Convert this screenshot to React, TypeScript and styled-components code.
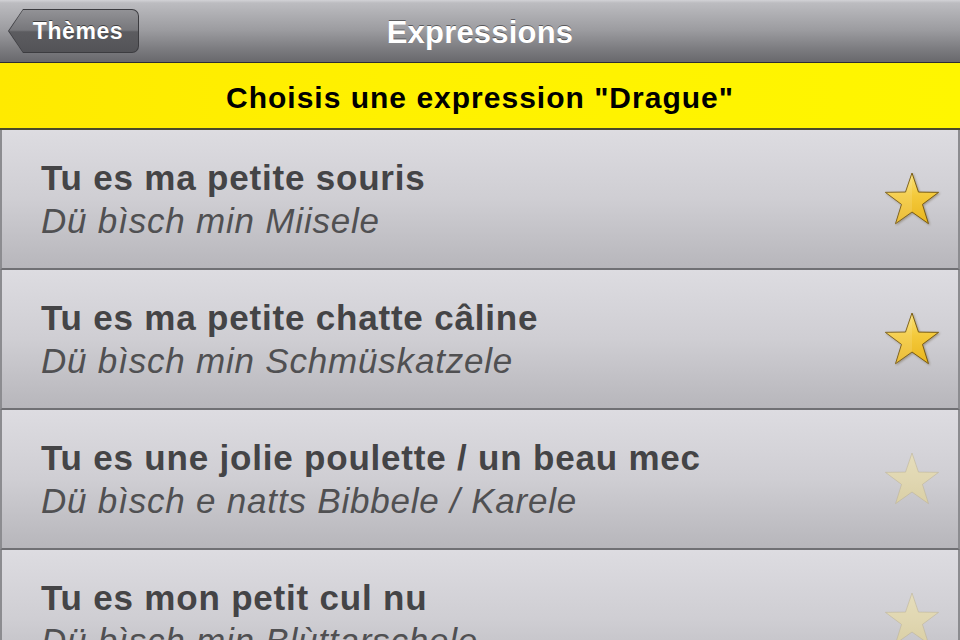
import styled, { createGlobalStyle } from 'styled-components';

type Expression = {
  id: number;
  french: string;
  alsacien: string;
  favorite: boolean;
};

const EXPRESSIONS: Expression[] = [
  { id: 1, french: 'Tu es ma petite souris', alsacien: 'Dü bìsch min Miisele', favorite: true },
  { id: 2, french: 'Tu es ma petite chatte câline', alsacien: 'Dü bìsch min Schmüskatzele', favorite: true },
  { id: 3, french: 'Tu es une jolie poulette / un beau mec', alsacien: 'Dü bìsch e natts Bibbele / Karele', favorite: false },
  { id: 4, french: 'Tu es mon petit cul nu', alsacien: 'Dü bìsch min Blùttarschele', favorite: false },
];

const STAR_POINTS =
  '28,2 34.47,21.1 54.6,21.35 38.46,33.4 44.46,52.65 28,41 11.54,52.65 17.54,33.4 1.4,21.35 21.53,21.1';

const Star = ({ active }: { active: boolean }) => (
  <StarIcon width="56" height="56" viewBox="0 0 56 56" $active={active}>
    <defs>
      <linearGradient id="starOn" x1="0" y1="0" x2="0" y2="1">
        <stop offset="0" stopColor="#f9e27a" />
        <stop offset="0.45" stopColor="#f4c93a" />
        <stop offset="1" stopColor="#e9b51e" />
      </linearGradient>
      <linearGradient id="starOff" x1="0" y1="0" x2="0" y2="1">
        <stop offset="0" stopColor="#ece2b4" />
        <stop offset="1" stopColor="#e2d49a" />
      </linearGradient>
    </defs>
    <polygon
      points={STAR_POINTS}
      fill={active ? 'url(#starOn)' : 'url(#starOff)'}
      stroke={active ? '#7a5c12' : '#b8ad88'}
      strokeWidth={active ? 1 : 0.6}
      strokeLinejoin="miter"
    />
    {active && <polygon points="28,2 28,41 11.54,52.65 17.54,33.4 1.4,21.35 21.53,21.1" fill="#ffffff" opacity="0.12" />}
  </StarIcon>
);

const App = () => {
  return (
    <Screen>
      <GlobalStyle />
      <NavBar>
        <BackButton>
          <BackInner>Thèmes</BackInner>
        </BackButton>
        <NavTitle>Expressions</NavTitle>
      </NavBar>
      <Banner>Choisis une expression "Drague"</Banner>
      <List>
        {EXPRESSIONS.map(item => (
          <Row key={item.id}>
            <TextBox>
              <French>{item.french}</French>
              <Alsacien>{item.alsacien}</Alsacien>
            </TextBox>
            <Star active={item.favorite} />
          </Row>
        ))}
      </List>
    </Screen>
  );
};

const GlobalStyle = createGlobalStyle`
  html, body {
    margin: 0;
    padding: 0;
    background: #c8c7cc;
    overflow: hidden;
  }
  body {
    font-family: "Liberation Sans", Helvetica, Arial, sans-serif;
  }
`;

const Screen = styled.div`
  width: 960px;
  height: 640px;
  overflow: hidden;
  display: flex;
  flex-direction: column;
`;

const NavBar = styled.header`
  box-sizing: border-box;
  height: 63px;
  flex-shrink: 0;
  display: flex;
  align-items: center;
  justify-content: center;
  padding: 3px 8px 0;
  position: relative;
  background: linear-gradient(to bottom, #d2d2d6 0px, #bcbcc0 3px, #9c9ca0 30px, #7a7a7e 50px, #6a6a6e 61px);
  border-bottom: 1px solid #2e2e30;
`;

const BackButton = styled.div`
  position: absolute;
  left: 8px;
  top: 9px;
  width: 131px;
  height: 44px;
  box-sizing: border-box;
  padding: 1px;
  background: #3c3c40;
  border-radius: 0 7px 7px 0;
  clip-path: polygon(0 50%, 15px 0, 100% 0, 100% 100%, 15px 100%);
  display: flex;
`;

const BackInner = styled.div`
  flex: 1;
  display: flex;
  align-items: center;
  justify-content: center;
  padding-left: 9px;
  border-radius: 0 6px 6px 0;
  clip-path: polygon(0 50%, 14px 0, 100% 0, 100% 100%, 14px 100%);
  background: linear-gradient(to bottom, #929296 0%, #77777b 48%, #5c5c60 52%, #535357 100%);
  color: #ffffff;
  font-size: 23px;
  letter-spacing: 0.6px;
  font-weight: 700;
  text-shadow: 0 -1px 0 rgba(0, 0, 0, 0.5);
`;

const NavTitle = styled.h1`
  margin: 0;
  color: #ffffff;
  font-size: 31px;
  font-weight: 700;
  letter-spacing: 0.2px;
  text-shadow: 0 -1px 0 rgba(0, 0, 0, 0.45);
`;

const Banner = styled.div`
  box-sizing: border-box;
  height: 67px;
  flex-shrink: 0;
  display: flex;
  align-items: center;
  justify-content: center;
  padding-top: 5px;
  background: linear-gradient(to right, #ffea00 0%, #fff100 40%, #fff600 100%);
  border-bottom: 2px solid #4a4a2a;
  color: #000000;
  font-size: 30px;
  letter-spacing: 1px;
  font-weight: 700;
`;

const List = styled.div`
  display: flex;
  flex-direction: column;
`;

const Row = styled.div`
  box-sizing: border-box;
  height: 140px;
  flex-shrink: 0;
  display: flex;
  align-items: center;
  justify-content: space-between;
  padding: 0 18px 0 41px;
  background: linear-gradient(to bottom, #dddce1 0%, #cfced3 50%, #b7b6bb 100%);
  border-left: 2px solid #8c8c90;
  border-right: 2px solid #8c8c90;
  border-bottom: 2px solid #707074;
`;

const TextBox = styled.div`
  display: flex;
  flex-direction: column;
  margin-left: -2px;
`;

const French = styled.div`
  font-size: 35px;
  line-height: 43px;
  font-weight: 700;
  color: #444446;
  letter-spacing: 0.8px;
`;

const Alsacien = styled.div`
  font-size: 35px;
  line-height: 43px;
  font-style: italic;
  color: #505052;
  letter-spacing: 0.8px;
`;

const StarIcon = styled.svg<{ $active: boolean }>`
  flex-shrink: 0;
  opacity: ${props => (props.$active ? 1 : 0.75)};
  filter: ${props => (props.$active ? 'drop-shadow(1px 1px 1px rgba(60, 40, 0, 0.35))' : 'none')};
`;

export default App;
